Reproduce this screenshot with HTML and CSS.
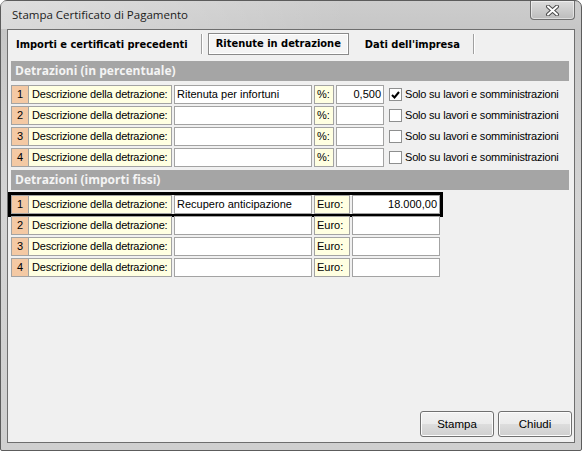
FILE: index.html
```html
<!DOCTYPE html>
<html lang="it">

<head>
  <meta charset="UTF-8">
  <title>Stampa Certificato di Pagamento</title>
  <link rel="stylesheet" href="styles.css">
</head>

<body>
  <div class="window">
    <div class="titlebar">
      <span class="title">Stampa Certificato di Pagamento</span>
      <span class="close">
        <svg width="17" height="11" viewBox="0 0 17 11">
          <path d="M4 1.5 L13 9.5 M13 1.5 L4 9.5" stroke="#4a4a4a" stroke-width="4" stroke-linecap="round"/>
          <path d="M4 1.5 L13 9.5 M13 1.5 L4 9.5" stroke="#fff" stroke-width="2" stroke-linecap="round"/>
        </svg>
      </span>
    </div>

    <div class="client">
      <div class="tab-header">
        <span class="tab-item">Importi e certificati precedenti</span>
        <span class="sep"></span>
        <span class="tab-item active">Ritenute in detrazione</span>
        <span class="tab-item">Dati dell'impresa</span>
        <span class="sep"></span>
      </div>

      <div class="panel">
        <div class="section-title">Detrazioni (in percentuale)</div>
        <div class="rows">
          <div class="row">
            <span class="num">1</span>
            <span class="label">Descrizione della detrazione:</span>
            <span class="field desc">Ritenuta per infortuni</span>
            <span class="label unit pct">%:</span>
            <span class="field value pct">0,500</span>
            <span class="check checked">
              <svg width="9" height="8" viewBox="0 0 9 8"><path d="M1 4 L3.5 6.5 L8 1" stroke="#000" stroke-width="2" fill="none"/></svg>
            </span>
            <span class="check-label">Solo su lavori e somministrazioni</span>
          </div>
          <div class="row">
            <span class="num">2</span>
            <span class="label">Descrizione della detrazione:</span>
            <span class="field desc"></span>
            <span class="label unit pct">%:</span>
            <span class="field value pct"></span>
            <span class="check"></span>
            <span class="check-label">Solo su lavori e somministrazioni</span>
          </div>
          <div class="row">
            <span class="num">3</span>
            <span class="label">Descrizione della detrazione:</span>
            <span class="field desc"></span>
            <span class="label unit pct">%:</span>
            <span class="field value pct"></span>
            <span class="check"></span>
            <span class="check-label">Solo su lavori e somministrazioni</span>
          </div>
          <div class="row">
            <span class="num">4</span>
            <span class="label">Descrizione della detrazione:</span>
            <span class="field desc"></span>
            <span class="label unit pct">%:</span>
            <span class="field value pct"></span>
            <span class="check"></span>
            <span class="check-label">Solo su lavori e somministrazioni</span>
          </div>
        </div>

        <div class="section-title">Detrazioni (importi fissi)</div>
        <div class="rows">
          <div class="row focused">
            <span class="num">1</span>
            <span class="label">Descrizione della detrazione:</span>
            <span class="field desc">Recupero anticipazione</span>
            <span class="label unit euro">Euro:</span>
            <span class="field value euro">18.000,00</span>
          </div>
          <div class="row">
            <span class="num">2</span>
            <span class="label">Descrizione della detrazione:</span>
            <span class="field desc"></span>
            <span class="label unit euro">Euro:</span>
            <span class="field value euro"></span>
          </div>
          <div class="row">
            <span class="num">3</span>
            <span class="label">Descrizione della detrazione:</span>
            <span class="field desc"></span>
            <span class="label unit euro">Euro:</span>
            <span class="field value euro"></span>
          </div>
          <div class="row">
            <span class="num">4</span>
            <span class="label">Descrizione della detrazione:</span>
            <span class="field desc"></span>
            <span class="label unit euro">Euro:</span>
            <span class="field value euro"></span>
          </div>
        </div>
      </div>

      <div class="footer">
        <button class="btn">Stampa</button>
        <button class="btn">Chiudi</button>
      </div>
    </div>
  </div>
</body>

</html>
```

FILE: styles.css
```css
* {
  box-sizing: border-box;
}

body {
  margin: 0;
  background: #fff;
  font-family: "Liberation Sans", Arial, sans-serif;
  font-size: 11px;
  color: #000;
}

.window {
  width: 582px;
  height: 451px;
  border: 1px solid #5c5c5c;
  border-radius: 7px 7px 2px 2px;
  background: linear-gradient(180deg, #cdcdcd 0, #c6c6c6 30px, #d4d4d4 200px, #cfcfcf 100%);
  display: flex;
  flex-direction: column;
}

.titlebar {
  height: 28px;
  display: flex;
  justify-content: space-between;
  padding-left: 11px;
  background: linear-gradient(90deg, rgba(255,255,255,.35), rgba(255,255,255,0) 60%);
}

.title {
  font-family: "Open Sans", "Noto Sans", sans-serif;
  font-size: 11.5px;
  line-height: 28px;
  color: #1c1c1c;
}

.close {
  width: 45px;
  height: 19px;
  margin-right: 6px;
  border: 1px solid #6f6f6f;
  border-top: none;
  border-radius: 0 0 4px 4px;
  background: linear-gradient(180deg, #dcdcdc, #bcbcbc);
  box-shadow: inset 0 0 0 1px rgba(255,255,255,.5);
  display: flex;
  align-items: center;
  justify-content: center;
}

.client {
  flex: 1;
  margin: 0 6px 7px 6px;
  border: 1px solid #6e6e6e;
  background: #f0f0f0;
  display: flex;
  flex-direction: column;
}

.tab-header {
  height: 27px;
  padding-top: 1px;
  display: flex;
  align-items: center;
  font-family: "DejaVu Sans Condensed", "DejaVu Sans", sans-serif;
  font-weight: bold;
  font-size: 11px;
}

.tab-item {
  padding: 0 13px 0 8px;
}

.tab-item.active {
  margin-left: 5px;
  height: 22px;
  line-height: 20px;
  padding: 0 7px;
  margin-right: 8px;
  border: 1px solid #8a8a8a;
  box-shadow: inset 1px 1px 0 #fff, inset -1px -1px 0 #fff;
  background: #f4f4f4;
}

.sep {
  width: 2px;
  height: 20px;
  border-left: 1px solid #a0a0a0;
  border-right: 1px solid #fff;
}

.panel {
  padding: 4px 4px 0 3px;
  flex: 1;
}

.section-title {
  height: 20px;
  width: 558px;
  padding-left: 4px;
  background: #a5a5a5;
  color: #f4f4f4;
  font-family: "Open Sans", "Noto Sans", sans-serif;
  font-weight: bold;
  font-size: 12px;
  line-height: 20px;
}

.rows {
  display: flex;
  flex-direction: column;
  gap: 2px;
  padding: 4px 0 3px;
}

.rows + .section-title + .rows {
  padding-top: 5px;
}

.row {
  display: flex;
  align-items: center;
  height: 19px;
}

.row > span {
  height: 19px;
}

.num,
.label,
.field {
  border: 1px solid #a3a3a3;
  line-height: 17px;
  white-space: nowrap;
  overflow: hidden;
}

.num {
  width: 18px;
  background: #f4c9a4;
  text-align: center;
}

.label {
  width: 143px;
  padding-left: 3px;
  background: #ffffe1;
  border-left: none;
  letter-spacing: -.2px;
}

.field {
  background: #fff;
  margin-left: 2px;
  padding: 0 2px;
}

.desc {
  width: 138px;
}

.unit {
  margin-left: 2px;
  border-left: 1px solid #a3a3a3;
  padding-left: 2px;
  letter-spacing: 0;
}

.unit.pct {
  width: 20px;
}

.unit.euro {
  width: 36px;
}

.value {
  text-align: right;
}

.value.pct {
  width: 48px;
}

.value.euro {
  width: 88px;
}

.row .check {
  width: 13px;
  height: 13px;
  margin-left: 5px;
  border: 1px solid #8e8f8f;
  background: #fff;
  display: flex;
  align-items: center;
  justify-content: center;
}

.check-label {
  margin-left: 3px;
  line-height: 19px;
  letter-spacing: -.2px;
}

.row.focused {
  box-shadow: 0 0 0 3px #000;
  width: 429px;
}

.footer {
  display: flex;
  justify-content: flex-end;
  gap: 4px;
  padding: 0 2px 5px 0;
}

.btn {
  width: 74px;
  height: 26px;
  border: 1px solid #707070;
  border-radius: 3px;
  background: linear-gradient(180deg, #f2f2f2 0, #ebebeb 50%, #dddddd 50%, #cfcfcf 100%);
  box-shadow: inset 0 0 0 1px #fcfcfc;
  font-family: "Liberation Sans", Arial, sans-serif;
  font-size: 11.5px;
  color: #000;
}
```
